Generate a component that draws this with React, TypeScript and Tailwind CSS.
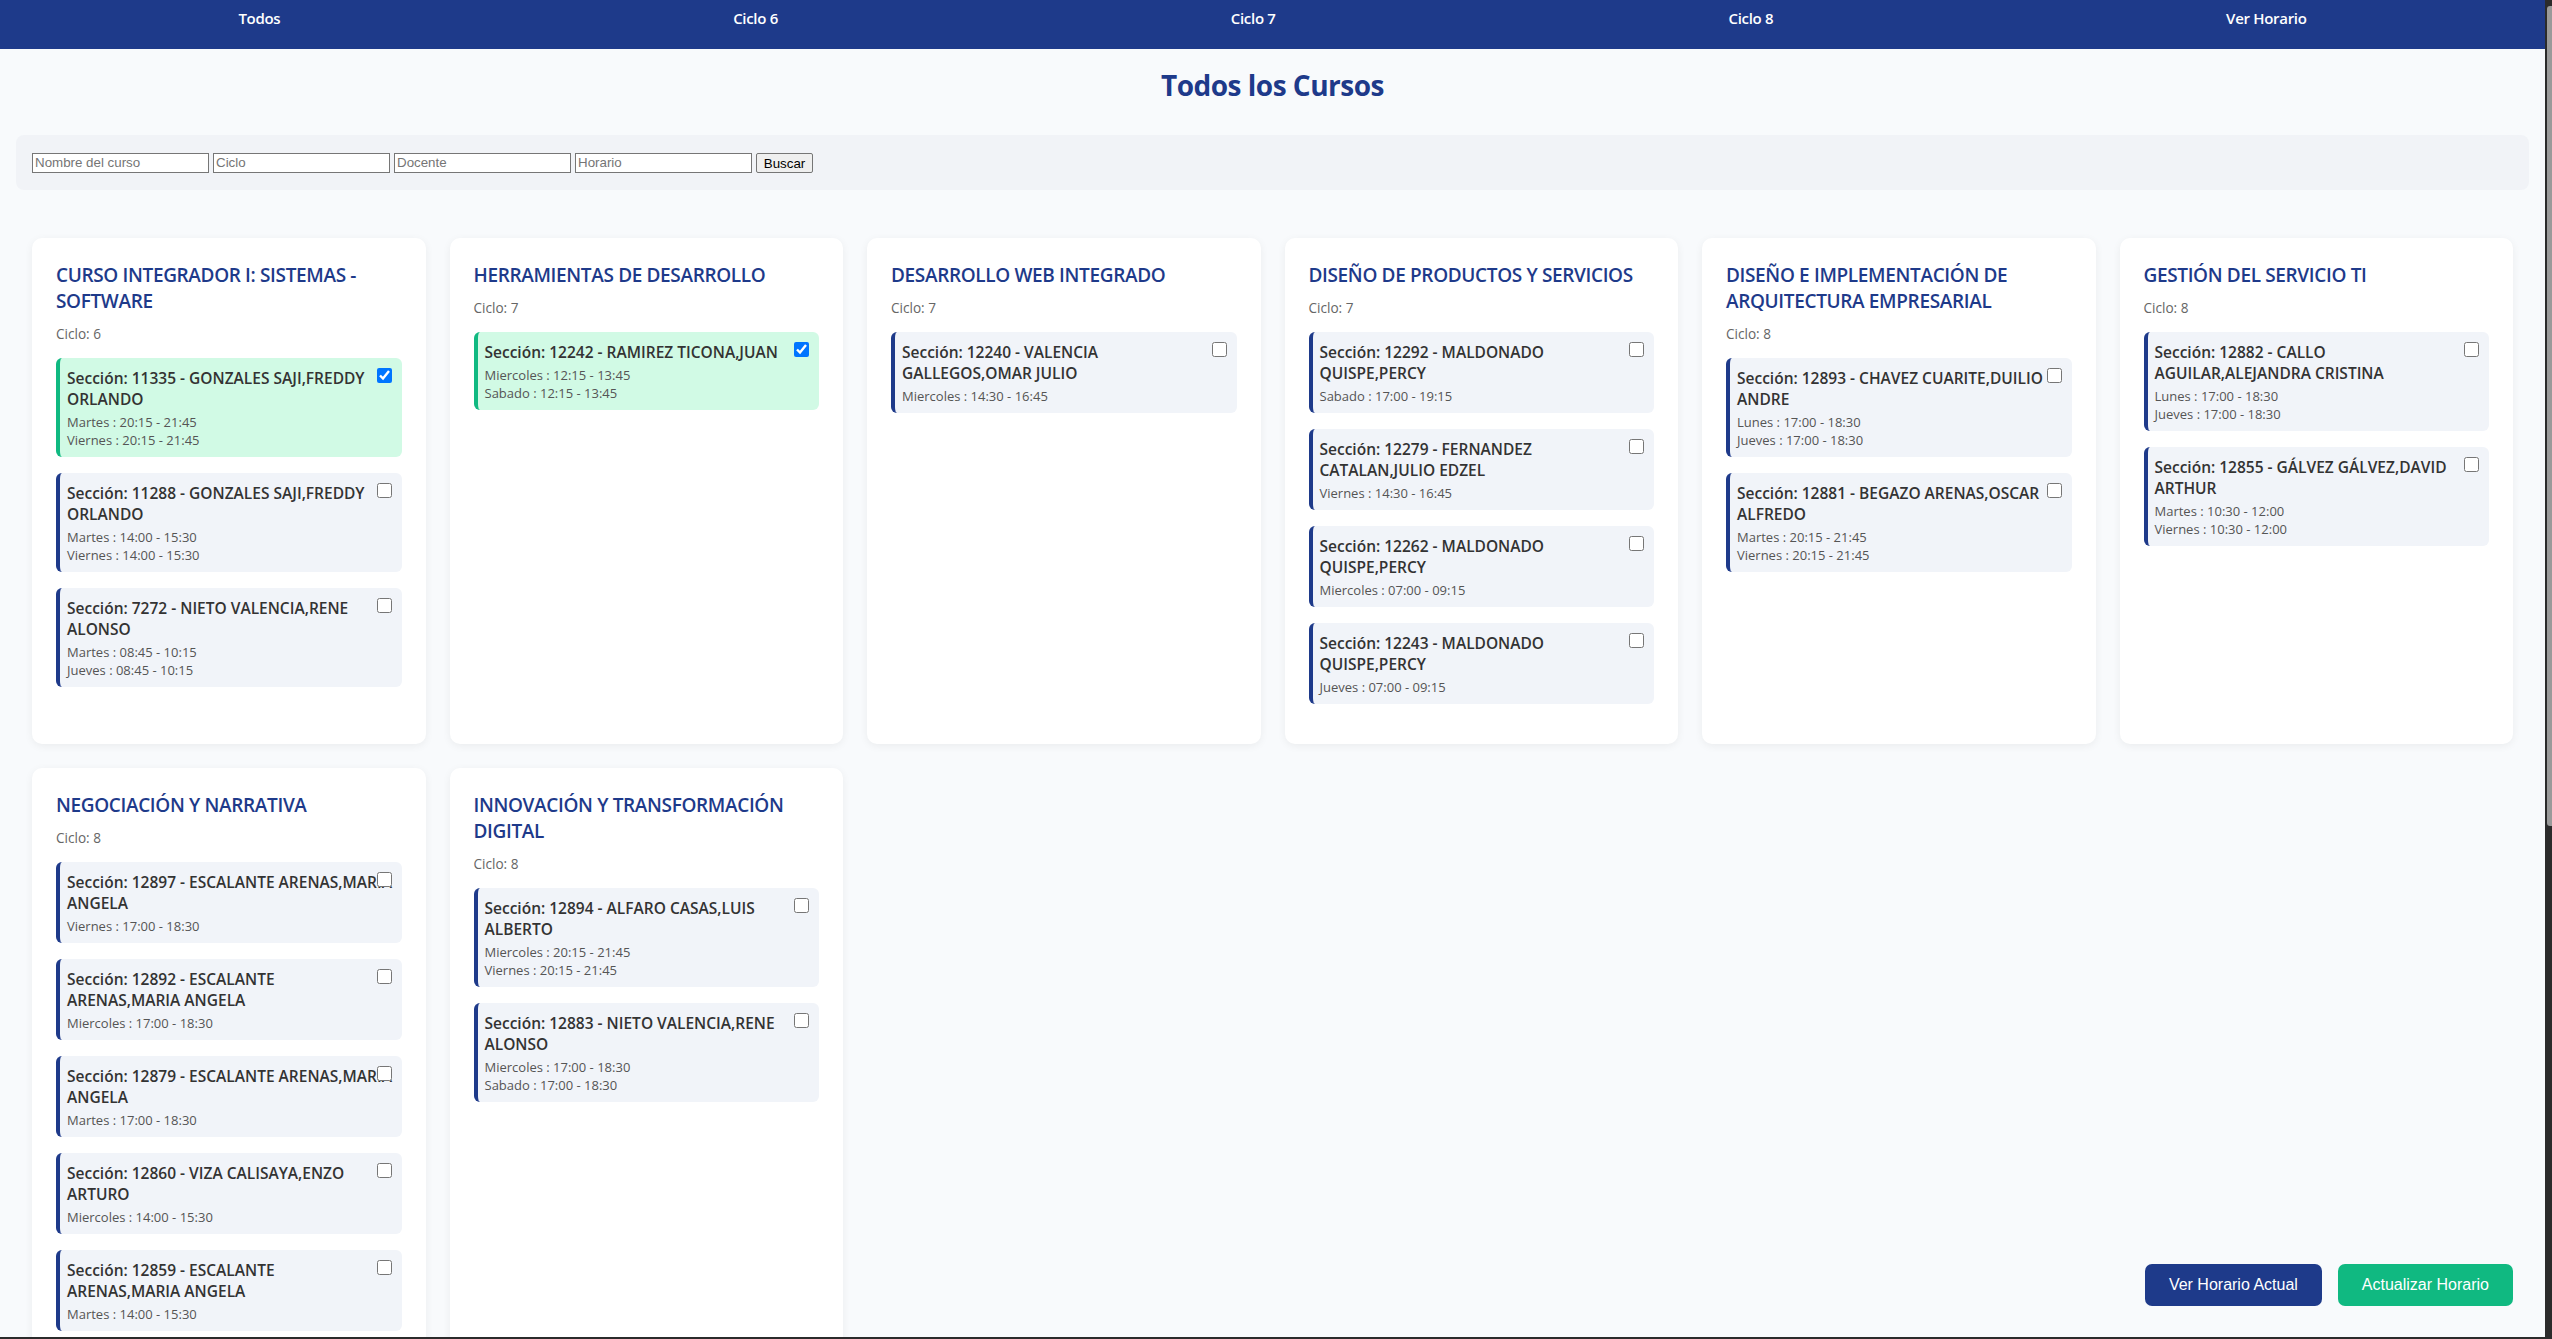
import React from "react";

interface Seccion {
  titulo: string;
  horarios: string[];
  sel?: boolean;
}

interface Curso {
  nombre: string;
  ciclo: number;
  secciones: Seccion[];
}

const cursos: Curso[] = [
  {
    nombre: "CURSO INTEGRADOR I: SISTEMAS - SOFTWARE",
    ciclo: 6,
    secciones: [
      { titulo: "Sección: 11335 - GONZALES SAJI,FREDDY\nORLANDO", horarios: ["Martes : 20:15 - 21:45", "Viernes : 20:15 - 21:45"], sel: true },
      { titulo: "Sección: 11288 - GONZALES SAJI,FREDDY\nORLANDO", horarios: ["Martes : 14:00 - 15:30", "Viernes : 14:00 - 15:30"] },
      { titulo: "Sección: 7272 - NIETO VALENCIA,RENE\nALONSO", horarios: ["Martes : 08:45 - 10:15", "Jueves : 08:45 - 10:15"] },
    ],
  },
  {
    nombre: "HERRAMIENTAS DE DESARROLLO",
    ciclo: 7,
    secciones: [
      { titulo: "Sección: 12242 - RAMIREZ TICONA,JUAN", horarios: ["Miercoles : 12:15 - 13:45", "Sabado : 12:15 - 13:45"], sel: true },
    ],
  },
  {
    nombre: "DESARROLLO WEB INTEGRADO",
    ciclo: 7,
    secciones: [
      { titulo: "Sección: 12240 - VALENCIA\nGALLEGOS,OMAR JULIO", horarios: ["Miercoles : 14:30 - 16:45"] },
    ],
  },
  {
    nombre: "DISEÑO DE PRODUCTOS Y SERVICIOS",
    ciclo: 7,
    secciones: [
      { titulo: "Sección: 12292 - MALDONADO\nQUISPE,PERCY", horarios: ["Sabado : 17:00 - 19:15"] },
      { titulo: "Sección: 12279 - FERNANDEZ\nCATALAN,JULIO EDZEL", horarios: ["Viernes : 14:30 - 16:45"] },
      { titulo: "Sección: 12262 - MALDONADO\nQUISPE,PERCY", horarios: ["Miercoles : 07:00 - 09:15"] },
      { titulo: "Sección: 12243 - MALDONADO\nQUISPE,PERCY", horarios: ["Jueves : 07:00 - 09:15"] },
    ],
  },
  {
    nombre: "DISEÑO E IMPLEMENTACIÓN DE ARQUITECTURA EMPRESARIAL",
    ciclo: 8,
    secciones: [
      { titulo: "Sección: 12893 - CHAVEZ CUARITE,DUILIO\nANDRE", horarios: ["Lunes : 17:00 - 18:30", "Jueves : 17:00 - 18:30"] },
      { titulo: "Sección: 12881 - BEGAZO ARENAS,OSCAR\nALFREDO", horarios: ["Martes : 20:15 - 21:45", "Viernes : 20:15 - 21:45"] },
    ],
  },
  {
    nombre: "GESTIÓN DEL SERVICIO TI",
    ciclo: 8,
    secciones: [
      { titulo: "Sección: 12882 - CALLO\nAGUILAR,ALEJANDRA CRISTINA", horarios: ["Lunes : 17:00 - 18:30", "Jueves : 17:00 - 18:30"] },
      { titulo: "Sección: 12855 - GÁLVEZ GÁLVEZ,DAVID\nARTHUR", horarios: ["Martes : 10:30 - 12:00", "Viernes : 10:30 - 12:00"] },
    ],
  },
  {
    nombre: "NEGOCIACIÓN Y NARRATIVA",
    ciclo: 8,
    secciones: [
      { titulo: "Sección: 12897 - ESCALANTE ARENAS,MARIA\nANGELA", horarios: ["Viernes : 17:00 - 18:30"] },
      { titulo: "Sección: 12892 - ESCALANTE\nARENAS,MARIA ANGELA", horarios: ["Miercoles : 17:00 - 18:30"] },
      { titulo: "Sección: 12879 - ESCALANTE ARENAS,MARIA\nANGELA", horarios: ["Martes : 17:00 - 18:30"] },
      { titulo: "Sección: 12860 - VIZA CALISAYA,ENZO\nARTURO", horarios: ["Miercoles : 14:00 - 15:30"] },
      { titulo: "Sección: 12859 - ESCALANTE\nARENAS,MARIA ANGELA", horarios: ["Martes : 14:00 - 15:30"] },
    ],
  },
  {
    nombre: "INNOVACIÓN Y TRANSFORMACIÓN DIGITAL",
    ciclo: 8,
    secciones: [
      { titulo: "Sección: 12894 - ALFARO CASAS,LUIS\nALBERTO", horarios: ["Miercoles : 20:15 - 21:45", "Viernes : 20:15 - 21:45"] },
      { titulo: "Sección: 12883 - NIETO VALENCIA,RENE\nALONSO", horarios: ["Miercoles : 17:00 - 18:30", "Sabado : 17:00 - 18:30"] },
    ],
  },
];

const tabs = ["Todos", "Ciclo 6", "Ciclo 7", "Ciclo 8", "Ver Horario"];

const SeccionItem = ({ s }: { s: Seccion }) => (
  <div
    className={`relative mb-4 rounded-[6px] border-l-4 pl-[7px] pr-[10px] pt-[10px] pb-[8px] ${
      s.sel ? "bg-[#d1fae5] border-[#10b981]" : "bg-[#f1f4f9] border-[#1e3a8a]"
    }`}
  >
    <div className="whitespace-pre text-[15.5px] leading-[21px] font-semibold text-[#333]">
      {s.titulo}
    </div>
    <div className="mt-[3px] text-[13px] leading-[18px] text-[#555]">
      {s.horarios.map((h) => (
        <div key={h}>{h}</div>
      ))}
    </div>
    <input
      type="checkbox"
      defaultChecked={s.sel}
      className="absolute right-[10px] top-[10px] h-[15px] w-[15px] accent-[#0075ff]"
    />
  </div>
);

const App = () => {
  return (
    <div className="flex h-[1339px] w-full flex-col overflow-hidden bg-[#2b2b2b] font-['Open_Sans',sans-serif]">
      <div className="flex min-h-0 flex-1">
        <div className="relative min-w-0 flex-1 overflow-hidden bg-[#f8fafc]">
          <nav className="flex h-[49px] items-start justify-around bg-[#1e3a8a] px-[12px] pt-[8px]">
            {tabs.map((t) => (
              <a key={t} className="cursor-pointer text-[15px] leading-[21px] font-semibold tracking-[-0.3px] text-white">
                {t}
              </a>
            ))}
          </nav>

          <h1 className="mt-[16px] text-center text-[28px] leading-[40px] font-bold tracking-[-0.5px] text-[#1e3a8a]">
            Todos los Cursos
          </h1>

          <div className="mx-4 mt-[30px] flex h-[55px] items-center gap-[4px] rounded-lg bg-[#f1f3f7] px-4 font-['Liberation_Sans',Arial,sans-serif] text-[13.33px]">
            <input placeholder="Nombre del curso" className="h-[20px] w-[177px] border border-[#767676] bg-white px-[2px] placeholder:text-[#757575]" />
            <input placeholder="Ciclo" className="h-[20px] w-[177px] border border-[#767676] bg-white px-[2px] placeholder:text-[#757575]" />
            <input placeholder="Docente" className="h-[20px] w-[177px] border border-[#767676] bg-white px-[2px] placeholder:text-[#757575]" />
            <input placeholder="Horario" className="h-[20px] w-[177px] border border-[#767676] bg-white px-[2px] placeholder:text-[#757575]" />
            <button className="h-[20px] w-[57px] rounded-[2px] border border-[#767676] bg-[#efefef] text-black">
              Buscar
            </button>
          </div>

          <div className="mt-[48px] grid grid-cols-6 gap-6 px-8">
            {cursos.map((c) => (
              <div key={c.nombre} className="rounded-[10px] bg-white p-6 shadow-[0_2px_8px_rgba(0,0,0,0.06)]">
                <h2 className="mb-[10px] text-[19px] leading-[26px] font-semibold tracking-[-0.35px] text-[#1e3a8a]">
                  {c.nombre}
                </h2>
                <p className="mb-[15px] text-[13.6px] leading-[19px] text-[#666]">Ciclo: {c.ciclo}</p>
                {c.secciones.map((s) => (
                  <SeccionItem key={s.titulo} s={s} />
                ))}
              </div>
            ))}
          </div>

          <div className="absolute bottom-[31px] right-[32px] flex gap-4 font-['Liberation_Sans',Arial,sans-serif]">
            <button className="h-[42px] rounded-[7px] bg-[#1e3a8a] px-6 text-[16px] text-white">Ver Horario Actual</button>
            <button className="h-[42px] rounded-[7px] bg-[#10b981] px-6 text-[16px] text-white">Actualizar Horario</button>
          </div>
        </div>
        <div className="flex w-[7px] flex-col bg-[#2b2b2b] pl-[2px] pt-[6px]">
          <div className="h-[820px] w-[5px] rounded-l-[3px] bg-[#9a9a9a]" />
        </div>
      </div>
      <div className="h-[2px] bg-[#2b2b2b]" />
    </div>
  );
};

export default App;
